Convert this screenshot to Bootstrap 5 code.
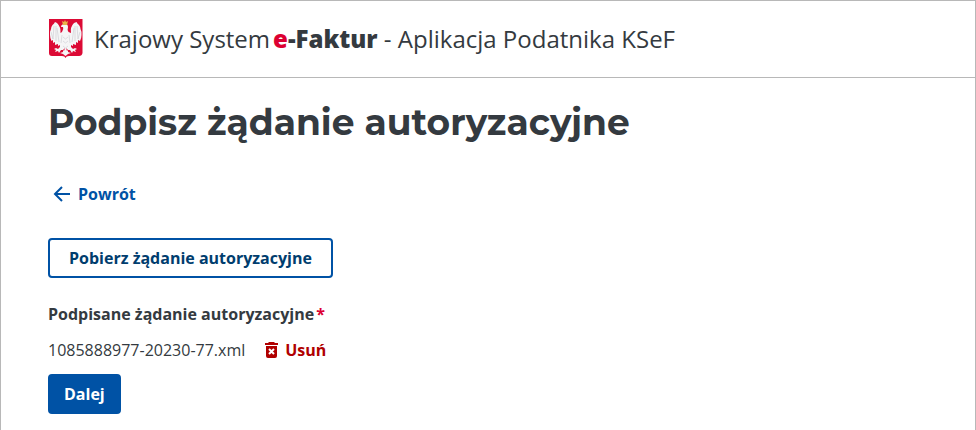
<!DOCTYPE html>
<html lang="pl">
<head>
<meta charset="utf-8">
<meta name="viewport" content="width=device-width, initial-scale=1">
<title>Krajowy System e-Faktur - Aplikacja Podatnika KSeF</title>
<link href="https://cdn.jsdelivr.net/npm/bootstrap@5.3.0/dist/css/bootstrap.min.css" rel="stylesheet">
<style>
  :root { --ink: #343a40; --blue: #0052a5; --blue-dark: #003d6e; --line: #b8b8b8; --crimson: #dc0032; --danger: #b00000; }
  body { font-family: "Open Sans", sans-serif; color: var(--ink); font-size: 16px; line-height: 24px; }
  .frame { border: 1px solid var(--line); border-bottom: 0; }
  .site-header { border-bottom: 1px solid var(--line); padding: 16px 47px; gap: 11px; }
  .site-name { font-size: 24px; line-height: 44px; }
  .site-name strong { font-weight: 800; margin-left: 3px; }
  .site-name em { font-style: normal; color: var(--crimson); }
  .content { padding: 20px 47px 16px; }
  .page-title { font-family: Montserrat, Inter, sans-serif; font-weight: 700; font-size: 36px; line-height: 48px; margin-bottom: 36px; }
  .btn { --bs-btn-font-weight: 700; --bs-btn-border-radius: 4px; --bs-btn-line-height: 24px; --bs-btn-border-width: 2px; --bs-btn-padding-x: 14px; }
  .btn-plain { --bs-btn-padding-x: 4px; --bs-btn-padding-y: 0; --bs-btn-border-width: 0; gap: 6px; }
  .back-link { --bs-btn-color: var(--blue); --bs-btn-hover-color: var(--blue-dark); margin-bottom: 32px; }
  .btn-download { --bs-btn-padding-x: 19px; --bs-btn-color: var(--blue-dark); --bs-btn-border-color: var(--blue); --bs-btn-bg: #fff; --bs-btn-hover-color: var(--blue-dark); --bs-btn-hover-border-color: var(--blue-dark); margin-bottom: 24px; }
  .btn-next { --bs-btn-color: #fff; --bs-btn-bg: var(--blue); --bs-btn-border-color: var(--blue); --bs-btn-hover-color: #fff; --bs-btn-hover-bg: var(--blue-dark); }
  .btn-remove { --bs-btn-color: var(--danger); --bs-btn-hover-color: var(--danger); gap: 4px; }
  .field-title { font-weight: 700; margin-bottom: 12px; }
  .field-title span { color: var(--crimson); margin-left: 2px; }
  .file-row { gap: 12px; margin-bottom: 12px; }
</style>
<script defer src="https://cdn.jsdelivr.net/npm/bootstrap@5.3.0/dist/js/bootstrap.bundle.min.js"></script>
</head>
<body>
<div class="frame min-vh-100">
  <header class="site-header d-flex align-items-center">
    <svg width="35" height="40" viewBox="0 0 35 40" role="img" aria-label="Godło Polski">
      <path fill="#dc0a35" d="M1 0H34.500V34Q34 37 31 37H21Q18 37 17.500 39Q17 37 14 37H4Q1 37 1 34Z"/>
      <path fill="#f5f5f6" d="M17 5Q13 5 13 8L15 8Q16 10 14 13L12.500 14Q13 8 9 4L7 3Q6 5 4.500 6Q3 8 3 10Q1.500 13 2 16Q2 19 3.500 22L5 21L5 24L7 23L7 26L10 25L10 27L12 26L12 28L10 30L8 29L6 30L8 31L7 33L10 32L11 34L13 31L15 31L15 33L12 34L15 35L17.500 37L20 35L23 34L20 33L20 31L22 31L24 34L25 32L28 33L27 31L29 30L27 29L25 30L23 28L23 26L25 27L25 25L28 26L28 23L30 24L30 21L32 22Q33.500 19 33.500 16Q34 13 32.500 10Q32.500 8 31 6Q29.500 5 28.500 3L26 4Q22 8 23 14L20.500 13Q19 11 20 8Q20 5 17 5Z"/>
      <g fill="none" stroke="#c9cbd2" stroke-width=".6">
        <path d="M6 7L5 20M8 7L8 22M9 9L11 23M3 13L5 20M29 7L30 20M27 7L27 22M26 9L24 23M32 13L30 20M14 16L13 24M21 16L22 24M15 18L17.500 20L20 18M15 22L17.500 24L20 22M15 27L17.500 29L20 27"/>
      </g>
      <path fill="#dc0a35" d="M15 31L17 29L16 32ZM20 31L18 29L19 32Z"/>
      <path fill="#e8b24a" d="M14 2L16 3L17 1L18 3L20 2L19 6H15Z"/>
    </svg>
    <div class="site-name">Krajowy System<strong><em>e</em>-Faktur</strong> - Aplikacja Podatnika KSeF</div>
  </header>
  <main class="content">
    <h1 class="page-title">Podpisz żądanie autoryzacyjne</h1>
    <a href="#" class="btn btn-plain back-link d-inline-flex align-items-center">
      <svg width="20" height="20" viewBox="0 0 20 20" fill="none" stroke="currentColor" stroke-width="2" aria-hidden="true"><path d="M18 10H3M10 3L3 10L10 17"/></svg>
      Powrót
    </a>
    <form>
      <button type="button" class="btn btn-download d-block">Pobierz żądanie autoryzacyjne</button>
      <div class="field-title" id="file-title">Podpisane żądanie autoryzacyjne<span>*</span></div>
      <div class="file-row d-flex align-items-center" role="group" aria-labelledby="file-title">
        <span>1085888977-20230-77.xml</span>
        <button type="button" class="btn btn-plain btn-remove d-inline-flex align-items-center">
          <svg width="20" height="20" viewBox="0 0 20 20" aria-hidden="true"><path fill="currentColor" d="M4 3H7L8 2H13L14 3H17V5H4ZM5 6H16V16Q16 18 14 18H7Q5 18 5 16Z"/><path stroke="#fff" stroke-width="2" d="M8 9L13 14M13 9L8 14"/></svg>
          Usuń
        </button>
      </div>
      <button type="submit" class="btn btn-next">Dalej</button>
    </form>
  </main>
</div>
</body>
</html>
